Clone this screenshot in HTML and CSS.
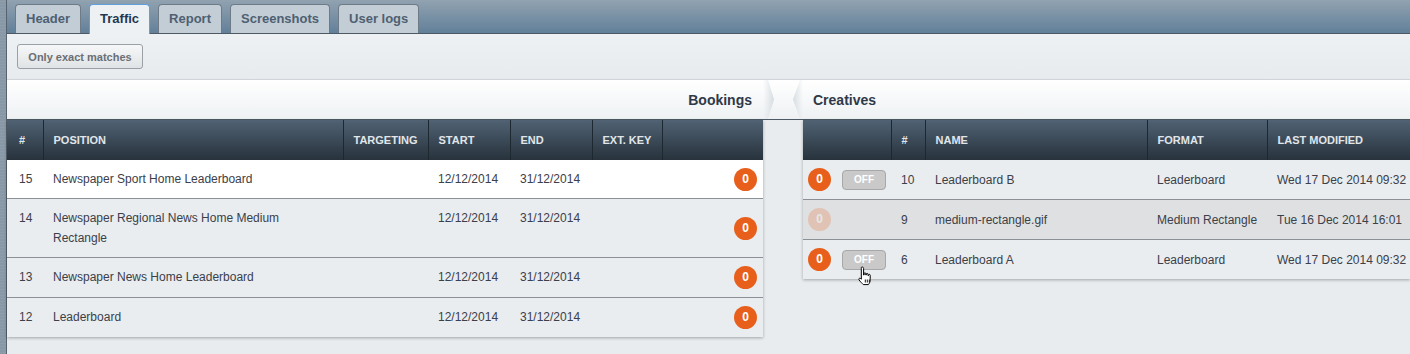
FILE: index.html
```html
<!DOCTYPE html>
<html lang="en">

<head>
    <meta charset="UTF-8">
    <title>Traffic</title>
    <link rel="stylesheet" href="styles.css">
</head>

<body>
    <div class="sidebar"></div>

    <div class="main">
        <nav class="tabs">
            <a class="tab">Header</a>
            <a class="tab active">Traffic</a>
            <a class="tab">Report</a>
            <a class="tab">Screenshots</a>
            <a class="tab">User logs</a>
        </nav>

        <div class="toolbar">
            <button class="btn">Only exact matches</button>
        </div>

        <div class="titles">
            <h2 class="title title-left">Bookings</h2>
            <svg class="chevrons" width="40" height="39" viewBox="0 0 40 39">
                <defs>
                    <linearGradient id="shadeR" x1="0" x2="1" y1="0" y2="0">
                        <stop offset="0" stop-color="#dde2e6" stop-opacity="0"/>
                        <stop offset="1" stop-color="#d6dce0"/>
                    </linearGradient>
                    <linearGradient id="shadeL" x1="0" x2="1" y1="0" y2="0">
                        <stop offset="0" stop-color="#d6dce0"/>
                        <stop offset="1" stop-color="#dde2e6" stop-opacity="0"/>
                    </linearGradient>
                </defs>
                <polygon points="0,0 5,0 11,19.5 5,39 0,39" fill="url(#shadeR)"/>
                <polygon points="37,0 40,0 40,39 37,39 30,19.5" fill="url(#shadeL)"/>
            </svg>
            <h2 class="title title-right">Creatives</h2>
        </div>

        <div class="panels">
            <table class="grid bookings">
                <colgroup>
                    <col style="width: 36px">
                    <col style="width: 300px">
                    <col style="width: 85px">
                    <col style="width: 82px">
                    <col style="width: 82px">
                    <col style="width: 70px">
                    <col style="width: 101px">
                </colgroup>
                <thead>
                    <tr>
                        <th class="num">#</th>
                        <th>Position</th>
                        <th>Targeting</th>
                        <th>Start</th>
                        <th>End</th>
                        <th>Ext. key</th>
                        <th></th>
                    </tr>
                </thead>
                <tbody>
                    <tr class="selected">
                        <td class="num">15</td>
                        <td>Newspaper Sport Home Leaderboard</td>
                        <td></td>
                        <td>12/12/2014</td>
                        <td>31/12/2014</td>
                        <td></td>
                        <td class="count"><span class="badge">0</span></td>
                    </tr>
                    <tr>
                        <td class="num">14</td>
                        <td>Newspaper Regional News Home Medium Rectangle</td>
                        <td></td>
                        <td>12/12/2014</td>
                        <td>31/12/2014</td>
                        <td></td>
                        <td class="count"><span class="badge">0</span></td>
                    </tr>
                    <tr>
                        <td class="num">13</td>
                        <td>Newspaper News Home Leaderboard</td>
                        <td></td>
                        <td>12/12/2014</td>
                        <td>31/12/2014</td>
                        <td></td>
                        <td class="count"><span class="badge">0</span></td>
                    </tr>
                    <tr>
                        <td class="num">12</td>
                        <td>Leaderboard</td>
                        <td></td>
                        <td>12/12/2014</td>
                        <td>31/12/2014</td>
                        <td></td>
                        <td class="count"><span class="badge">0</span></td>
                    </tr>
                </tbody>
            </table>

            <div></div>

            <table class="grid creatives">
                <colgroup>
                    <col style="width: 88px">
                    <col style="width: 34px">
                    <col style="width: 222px">
                    <col style="width: 120px">
                    <col style="width: 143px">
                </colgroup>
                <thead>
                    <tr>
                        <th></th>
                        <th>#</th>
                        <th>Name</th>
                        <th>Format</th>
                        <th>Last modified</th>
                    </tr>
                </thead>
                <tbody>
                    <tr>
                        <td class="controls"><span class="badge">0</span><span class="toggle">OFF</span></td>
                        <td>10</td>
                        <td>Leaderboard B</td>
                        <td>Leaderboard</td>
                        <td>Wed 17 Dec 2014 09:32</td>
                    </tr>
                    <tr class="disabled">
                        <td class="controls"><span class="badge">0</span></td>
                        <td>9</td>
                        <td>medium-rectangle.gif</td>
                        <td>Medium Rectangle</td>
                        <td>Tue 16 Dec 2014 16:01</td>
                    </tr>
                    <tr>
                        <td class="controls">
                            <span class="badge">0</span><span class="toggle">OFF</span>
                            <svg class="cursor" width="17" height="20" viewBox="0 0 17 20">
                                <path d="M5 1c1 0 1.6.6 1.6 1.6V9h.5V7.6c0-1.1 1.7-1.1 1.7 0V9h.5V8.2c0-1.1 1.7-1.1 1.7 0V9.6h.5V9.2c0-1.1 1.7-1.1 1.7 0v4.6c0 2-.8 3.6-1.8 4.8H6.3C5.2 17.5 3.2 15.6 2 13.8c-.6-.9.4-2.2 1.5-1.3l.8.7V2.6C4.3 1.6 4.3 1 5 1z" fill="#fff" stroke="#000" stroke-width="1" stroke-linejoin="round"/>
                                <path d="M8.3 13.5v3M10.3 13.5v3M12.3 13.5v3" stroke="#000" stroke-width="0.9"/>
                            </svg>
                        </td>
                        <td>6</td>
                        <td>Leaderboard A</td>
                        <td>Leaderboard</td>
                        <td>Wed 17 Dec 2014 09:32</td>
                    </tr>
                </tbody>
            </table>
        </div>
    </div>
</body>

</html>
```

FILE: styles.css
```css
body {
    margin: 0;
    font-family: "Liberation Sans", Arial, sans-serif;
    background-color: #e8ecef;
    display: flex;
    min-height: 354px;
    overflow: hidden;
}

.sidebar {
    width: 6px;
    background: repeating-linear-gradient(0deg, #8696a4 0, #8f9fac 2px, #8292a0 3px);
    border-right: 1px solid #56626d;
    flex-shrink: 0;
}

.main {
    flex: 1;
    min-width: 0;
}

/* tabs */
.tabs {
    height: 33px;
    background: linear-gradient(#91a2b0, #62809a);
    border-bottom: 1px solid #4c5864;
    padding-left: 8px;
    display: flex;
    align-items: flex-end;
    gap: 8px;
}

.tab {
    height: 28px;
    line-height: 28px;
    padding: 0 10px;
    background-color: #c3cdd6;
    border: 1px solid #6e7b87;
    border-bottom: none;
    border-radius: 4px 4px 0 0;
    font-size: 13px;
    font-weight: bold;
    color: #4e6071;
}

.tab.active {
    background-color: #eef1f4;
    border-color: #5f9fda;
    color: #1f3853;
    margin-bottom: -1px;
    height: 29px;
}

/* toolbar */
.toolbar {
    height: 46px;
    box-sizing: border-box;
    padding: 10px 10px 0;
    background: linear-gradient(#eef1f4, #e7ebee);
    border-bottom: 1px solid #cfd5db;
}

.btn {
    height: 25px;
    width: 126px;
    padding: 0;
    font-family: inherit;
    font-size: 11px;
    font-weight: bold;
    color: #6a6f75;
    background: linear-gradient(#f6f7f8, #e0e3e5);
    border: 1px solid #9aa0a5;
    border-radius: 3px;
}

/* section titles */
.titles {
    display: grid;
    grid-template-columns: 756px 40px 1fr;
    height: 39px;
    background: linear-gradient(#ffffff, #eef1f3);
    border-bottom: 1px solid #4e5a64;
}

.title {
    margin: 0;
    font-size: 14px;
    font-weight: bold;
    color: #2f3948;
    line-height: 40px;
}

.title-left {
    text-align: right;
    padding-right: 11px;
}

.title-right {
    padding-left: 10px;
}

/* tables */
.panels {
    display: grid;
    grid-template-columns: 756px 40px 607px;
    align-items: start;
}

.grid {
    border-collapse: collapse;
    table-layout: fixed;
    width: 100%;
    font-size: 12px;
    color: #3b4049;
    box-shadow: 0 1px 3px rgba(0, 0, 0, 0.3);
}

.grid th {
    height: 40px;
    padding: 0 10px;
    text-align: left;
    font-size: 11px;
    font-weight: bold;
    text-transform: uppercase;
    color: #e1e6eb;
    background: linear-gradient(#506273, #27323c);
    border-left: 1px solid #1e2831;
    white-space: nowrap;
    overflow: hidden;
}

.grid th:first-child {
    border-left: none;
}

.grid td {
    padding: 9px 10px;
    line-height: 20px;
    background-color: #e9edf0;
    border-bottom: 1px solid #8b9197;
    white-space: nowrap;
}

.bookings td {
    white-space: normal;
    vertical-align: top;
}

.bookings tr:nth-child(n+3) td:not(.count) {
    padding-bottom: 10px;
}

.bookings td.num,
.bookings th.num {
    padding-left: 12px;
}

.bookings tr.selected td {
    background-color: #fff;
}

.grid tbody tr:last-child td {
    border-bottom: none;
}

.bookings td.count {
    text-align: right;
    vertical-align: middle;
    padding-right: 6px;
    padding-top: 0;
    padding-bottom: 0;
}

.badge {
    display: inline-block;
    width: 23px;
    height: 23px;
    line-height: 23px;
    border-radius: 50%;
    background-color: #e75f1b;
    color: #fff;
    font-weight: bold;
    font-size: 12px;
    text-align: center;
    vertical-align: middle;
}

.creatives td {
    padding-top: 10px;
    padding-bottom: 9px;
    line-height: 20px;
}

.creatives td.controls {
    position: relative;
    padding: 0 0 0 5px;
}

.controls .toggle {
    display: inline-block;
    margin-left: 11px;
    width: 42px;
    height: 18px;
    line-height: 18px;
    border: 1px solid #a8a8a8;
    border-radius: 4px;
    background-color: #c9c9c9;
    color: #fff;
    font-size: 10px;
    font-weight: bold;
    text-align: center;
    vertical-align: middle;
}

.creatives tr.disabled td {
    background-color: #dfe0e1;
}

.creatives tr.disabled .badge {
    opacity: 0.22;
}

.cursor {
    position: absolute;
    left: 54px;
    top: 26px;
}
```
